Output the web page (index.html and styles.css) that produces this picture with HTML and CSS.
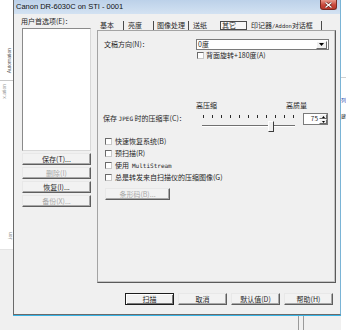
FILE: index.html
```html
<!DOCTYPE html>
<html lang="zh-CN">

<head>
    <meta charset="UTF-8">
    <meta name="viewport" content="width=device-width, initial-scale=1.0">
    <title>Canon DR-6030C on STI - 0001</title>
    <link rel="stylesheet" href="styles.css">
</head>

<body>
    <!-- desktop behind the dialog -->
    <div class="desk-left">
        <span class="vtext dark">Automation</span>
        <span class="vtext light">x.ation</span>
        <span class="vtext tiny">.ion</span>
    </div>
    <div class="desk-right">
        <span class="peek blue">列</span>
        <span class="peek">建</span>
    </div>
    <div class="desk-lines"></div>

    <div class="window">
        <div class="titlebar">
            <span class="title">Canon DR-6030C on STI - 0001</span>
            <span class="close-btn">
                <svg width="9" height="6" viewBox="0 0 9 6">
                    <path d="M1.5 0.5 L7.5 5.5 M7.5 0.5 L1.5 5.5" stroke="#5a1a14" stroke-width="2.4" />
                    <path d="M1.5 0.5 L7.5 5.5 M7.5 0.5 L1.5 5.5" stroke="#fff" stroke-width="1.3" />
                </svg>
            </span>
        </div>

        <div class="client">
            <div class="main">
                <div class="prefs">
                    <div class="prefs-label">用户首选项(E)：</div>
                    <div class="listbox"></div>
                    <button class="btn">保存(T)...</button>
                    <button class="btn" disabled>删除(I)</button>
                    <button class="btn">恢复(I)...</button>
                    <button class="btn" disabled>备份(X)...</button>
                </div>

                <div class="tabs-area">
                    <div class="tabs">
                        <span class="tab t1">基本</span>
                        <span class="tab t2">亮度</span>
                        <span class="tab t3">图像处理</span>
                        <span class="tab t4 no-sep">送纸</span>
                        <span class="tab t5 active">其它</span>
                        <span class="tab t6">印记器<span class="latin">/Addon</span>对话框</span>
                    </div>

                    <div class="panel">
                        <div class="orient-row">
                            <span class="orient-label">文稿方向(N)：</span>
                            <div class="dropdown">
                                <span class="dd-value">0度</span>
                                <span class="dd-arrow">
                                    <svg width="5" height="3" viewBox="0 0 5 3"><path d="M0 0 H5 L2.5 3 Z" fill="#000" /></svg>
                                </span>
                            </div>
                        </div>
                        <label class="check back-row"><span class="box"></span>背面旋转+180度(A)</label>

                        <div class="jpeg-scale">
                            <span>高压缩</span>
                            <span>高质量</span>
                        </div>
                        <div class="jpeg-row">
                            <span class="jpeg-label">保存 <span class="latin">JPEG</span> 时的压缩率(C)：</span>
                            <div class="slider">
                                <div class="ticks">
                                    <i></i><i></i><i></i><i></i><i></i><i></i><i></i><i></i><i></i><i></i><i></i>
                                </div>
                                <div class="track"></div>
                                <div class="thumb"></div>
                            </div>
                            <div class="spin">
                                <span class="spin-value">75</span>
                                <span class="spin-arrows">
                                    <span class="spin-btn"><svg width="3" height="2" viewBox="0 0 3 2"><path d="M0 2 H3 L1.5 0 Z" fill="#000" /></svg></span>
                                    <span class="spin-btn"><svg width="3" height="2" viewBox="0 0 3 2"><path d="M0 0 H3 L1.5 2 Z" fill="#000" /></svg></span>
                                </span>
                            </div>
                        </div>

                        <div class="options">
                            <label class="check opt"><span class="box"></span>快速恢复系统(B)</label>
                            <label class="check opt"><span class="box"></span>预扫描(R)</label>
                            <label class="check opt"><span class="box"></span>使用<span class="latin">MultiStream</span></label>
                            <label class="check opt"><span class="box"></span>总是转发来自扫描仪的压缩图像(G)</label>
                        </div>
                        <button class="btn barcode" disabled>条形码(B)...</button>
                    </div>
                </div>
            </div>

            <div class="footer">
                <button class="btn foot-btn default">扫描</button>
                <button class="btn foot-btn">取消</button>
                <button class="btn foot-btn">默认值(D)</button>
                <button class="btn foot-btn">帮助(H)</button>
            </div>
        </div>
    </div>
</body>

</html>
```

FILE: styles.css
```css
* {
    margin: 0;
    padding: 0;
    box-sizing: border-box;
}

body {
    position: relative;
    width: 346px;
    height: 330px;
    overflow: hidden;
    background-color: #f0f0f0;
    font-family: "Noto Sans CJK SC", "Liberation Sans", sans-serif;
    font-size: 7px;
    color: #262626;
}

.latin {
    font-family: "DejaVu Sans Mono", monospace;
    font-size: 6px;
}

/* desktop pieces around the dialog */
.desk-left {
    position: absolute;
    left: 0;
    top: 0;
    width: 13px;
    height: 250px;
    background-color: #fff;
    border-bottom: 1px solid #e4e4e4;
}

.desk-left::after {
    content: "";
    position: absolute;
    left: 0;
    top: 80px;
    width: 13px;
    border-top: 1px solid #c8c8c8;
}

.vtext {
    position: absolute;
    writing-mode: vertical-rl;
    transform: rotate(180deg);
    font-family: "Liberation Sans", sans-serif;
    font-size: 5px;
    line-height: 5px;
}

.vtext.dark {
    left: 7px;
    top: 48px;
    color: #555;
}

.vtext.light {
    left: 2px;
    top: 84px;
    color: #999;
}

.vtext.tiny {
    left: 8px;
    top: 232px;
    color: #888;
}

.desk-right {
    position: absolute;
    right: 0;
    top: 0;
    width: 5px;
    height: 330px;
    overflow: hidden;
    background-color: #fff;
    border-top: 77px solid #fff;
    box-shadow: inset 0 1px 0 #d0d0d0;
}

.peek {
    display: block;
    font-size: 5px;
    line-height: 11px;
    color: #222;
}

.peek.blue {
    margin-top: 17px;
    margin-bottom: 5px;
    color: #2a4fb0;
}

.desk-lines {
    position: absolute;
    left: 298px;
    top: 316px;
    width: 6px;
    height: 14px;
    border-left: 1px solid #9a9a9a;
    border-right: 1px solid #9a9a9a;
}

/* dialog window */
.window {
    position: absolute;
    left: 13px;
    top: 0;
    width: 328px;
    height: 315px;
    display: flex;
    flex-direction: column;
    background-color: #f0f0f0;
    border-left: 1px solid #6a6a6a;
    border-right: 1px solid #7ab4d6;
    border-bottom: 1px solid #6a6a6a;
    box-shadow: 0 1px 0 #38b4e6;
}

.titlebar {
    height: 14px;
    display: flex;
    align-items: flex-start;
    padding-left: 2px;
    background: linear-gradient(#bcd1e9, #d3e2f2);
}

.title {
    margin-top: 2px;
    font-family: "Liberation Sans", sans-serif;
    font-size: 7.5px;
    line-height: 9px;
    color: #111;
}

.close-btn {
    margin-left: auto;
    margin-right: 3px;
    width: 17px;
    height: 10px;
    display: flex;
    align-items: center;
    justify-content: center;
    background: linear-gradient(#e8998a, #c9473a 55%, #b9392c);
    border: 1px solid #7c2a22;
    border-top: none;
    border-radius: 0 0 3px 3px;
}

.client {
    flex: 1;
    display: flex;
    flex-direction: column;
}

.main {
    display: flex;
    height: 269px;
}

/* left column */
.prefs {
    width: 69px;
    margin-left: 8px;
    padding-top: 3px;
    display: flex;
    flex-direction: column;
}

.prefs-label {
    height: 10px;
    line-height: 9px;
    margin-left: -1px;
    margin-bottom: 1px;
    white-space: nowrap;
}

.listbox {
    height: 123px;
    background-color: #fff;
    border: 1px solid #8a8a8a;
    border-right-color: #d8d8d8;
    border-bottom-color: #d8d8d8;
}

.btn {
    height: 12px;
    margin-top: 2px;
    font-family: inherit;
    font-size: 7px;
    line-height: 9px;
    color: #262626;
    background-color: #f2f2f2;
    border: 1px solid;
    border-color: #e8e8e8 #5e5e5e #5e5e5e #e8e8e8;
    box-shadow: inset -1px -1px 0 #a8a8a8;
}

.btn:disabled {
    color: #a8a8a8;
}

/* tabs */
.tabs-area {
    width: 239px;
    margin-left: 6px;
    padding-top: 7px;
    display: flex;
    flex-direction: column;
}

.tabs {
    height: 9px;
    display: flex;
}

.tab {
    line-height: 9px;
    white-space: nowrap;
    border-right: 1px solid #4a4a4a;
}

.tab.no-sep {
    border-right: none;
}

.t1 {
    width: 27px;
    padding-left: 3px;
}

.t2 {
    width: 30px;
    padding-left: 4px;
}

.t3 {
    width: 35px;
    padding-left: 3px;
}

.t4 {
    width: 31px;
    padding-left: 4px;
}

.t5 {
    width: 27px;
    padding-left: 1px;
}

.tab.active {
    border: 1px solid #4a4a4a;
    line-height: 7px;
    background-color: #f6f6f6;
}

.t6 {
    width: 75px;
    padding-left: 4px;
}

.t6 .latin {
    font-size: 5.5px;
}

.panel {
    height: 253px;
    padding-left: 6px;
    display: flex;
    flex-direction: column;
    align-items: flex-start;
    border: 1px solid #a4a4a4;
    border-right-color: #5a5a5a;
    border-bottom-color: #5a5a5a;
    box-shadow: inset -1px -1px 0 #c4c4c4;
}

.orient-row {
    margin-top: 8px;
    height: 11px;
    display: flex;
}

.orient-label {
    width: 92px;
    line-height: 10px;
}

.dropdown {
    width: 133px;
    height: 11px;
    display: flex;
    align-items: center;
    background-color: #fff;
    border: 1px solid #7a7a7a;
}

.dd-value {
    flex: 1;
    padding-left: 1px;
    line-height: 9px;
}

.dd-arrow {
    width: 11px;
    height: 8px;
    margin-right: 1px;
    display: flex;
    align-items: center;
    justify-content: center;
    background-color: #f0f0f0;
    border: 1px solid;
    border-color: #fff #6a6a6a #6a6a6a #fff;
}

.check {
    display: flex;
    align-items: center;
    white-space: nowrap;
    line-height: 9px;
}

.box {
    width: 7px;
    height: 7px;
    background-color: #fff;
    border: 1px solid #6a6a6a;
    border-right-color: #c8c8c8;
    border-bottom-color: #c8c8c8;
}

.back-row {
    height: 10px;
    margin-left: 93px;
    gap: 2px;
}

.jpeg-scale {
    width: 111px;
    height: 8px;
    margin-top: 41px;
    margin-left: 92px;
    display: flex;
    justify-content: space-between;
    line-height: 8px;
}

.jpeg-row {
    height: 21px;
    margin-top: 3px;
    margin-left: -1px;
    display: flex;
    align-items: flex-start;
}

.jpeg-label {
    width: 99px;
    margin-top: 2px;
    line-height: 9px;
    white-space: nowrap;
}

.slider {
    position: relative;
    width: 93px;
    height: 21px;
}

.ticks {
    width: 91px;
    height: 3px;
    margin-top: 3px;
    margin-left: 1px;
    display: flex;
    justify-content: space-between;
}

.ticks i {
    width: 1px;
    height: 3px;
    background-color: #2a2a2a;
}

.track {
    height: 2px;
    margin-top: 7px;
    border-top: 1px solid #707070;
    border-bottom: 1px solid #fff;
}

.thumb {
    position: absolute;
    left: 66px;
    top: 9px;
    width: 6px;
    height: 11px;
    background-color: #f0f0f0;
    border: 1px solid;
    border-color: #fff #3c3c3c #3c3c3c #fff;
}

.spin {
    width: 25px;
    height: 12px;
    margin-top: 1px;
    margin-left: 8px;
    display: flex;
    background-color: #fff;
    border: 1px solid #7a7a7a;
}

.spin-value {
    flex: 1;
    padding-right: 1px;
    text-align: right;
    line-height: 9px;
    font-size: 6.5px;
}

.spin-arrows {
    width: 8px;
    display: flex;
    flex-direction: column;
}

.spin-btn {
    flex: 1;
    display: flex;
    align-items: center;
    justify-content: center;
    background-color: #f0f0f0;
    border: 1px solid;
    border-color: #fff #6a6a6a #6a6a6a #fff;
}

.options {
    margin-top: 2px;
    margin-left: 1px;
    display: flex;
    flex-direction: column;
}

.opt {
    height: 12px;
    gap: 3px;
}

.barcode {
    width: 65px;
    margin-top: 5px;
    margin-left: 1px;
}

/* bottom buttons */
.footer {
    margin-top: 10px;
    padding-right: 7px;
    display: flex;
    justify-content: flex-end;
    gap: 4px;
}

.foot-btn {
    width: 49px;
    margin-top: 0;
}

.foot-btn.default {
    border: 1px solid #1e1e1e;
    box-shadow: inset 1px 1px 0 #fff, inset -1px -1px 0 #7a7a7a;
}
```
